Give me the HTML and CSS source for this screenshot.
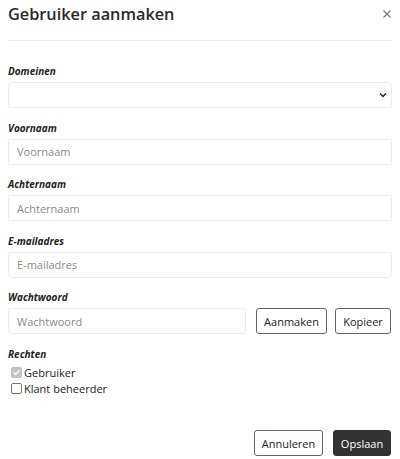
FILE: index.html
```html
<!DOCTYPE html>
<html lang="nl">
<head>
<meta charset="utf-8">
<title>Gebruiker aanmaken</title>
<link rel="stylesheet" href="styles.css">
</head>
<body>
<div class="modal">
  <div class="modal-header">
    <h1 class="modal-title">Gebruiker aanmaken</h1>
    <button class="close" type="button" aria-label="Sluiten">
      <svg width="8" height="8" viewBox="0 0 8 8"><path d="M0.5 0.5L7.5 7.5M7.5 0.5L0.5 7.5" stroke="#777" stroke-width="1.1" fill="none"/></svg>
    </button>
  </div>
  <div class="modal-body">
    <div class="group">
      <label class="label">Domeinen</label>
      <div class="select-wrap">
        <select class="control select"><option></option></select>
        <svg class="chevron" width="8" height="6" viewBox="0 0 8 6"><path d="M1 1.5L4 4.5L7 1.5" stroke="#222" stroke-width="1.4" fill="none"/></svg>
      </div>
    </div>
    <div class="group">
      <label class="label">Voornaam</label>
      <input class="control" type="text" placeholder="Voornaam">
    </div>
    <div class="group">
      <label class="label">Achternaam</label>
      <input class="control" type="text" placeholder="Achternaam">
    </div>
    <div class="group">
      <label class="label">E-mailadres</label>
      <input class="control" type="text" placeholder="E-mailadres">
    </div>
    <div class="group">
      <label class="label">Wachtwoord</label>
      <div class="pw-row">
        <input class="control pw" type="text" placeholder="Wachtwoord">
        <button class="btn btn-outline btn-aanmaken" type="button">Aanmaken</button>
        <button class="btn btn-outline btn-kopieer" type="button">Kopieer</button>
      </div>
    </div>
    <div class="group rights">
      <label class="label">Rechten</label>
      <div class="check-row"><span class="check checked"><svg width="9" height="9" viewBox="0 0 9 9"><path d="M1.8 4.6L3.7 6.5L7.3 2.4" stroke="#fff" stroke-width="1.4" fill="none"/></svg></span><span>Gebruiker</span></div>
      <div class="check-row"><span class="check"></span><span>Klant beheerder</span></div>
    </div>
  </div>
  <div class="modal-footer">
    <button class="btn btn-outline btn-cancel" type="button">Annuleren</button>
    <button class="btn btn-dark btn-save" type="button">Opslaan</button>
  </div>
</div>
</body>
</html>
```

FILE: styles.css
```css
html, body {
  margin: 0;
  padding: 0;
  background: #fff;
}
body {
  font-family: "Open Sans", "Noto Sans", sans-serif;
  color: #222;
}
.modal {
  width: 400px;
  height: 459px;
  box-sizing: border-box;
  padding: 0 8px;
  display: flex;
  flex-direction: column;
}
.modal-header {
  display: flex;
  align-items: flex-start;
  justify-content: space-between;
  padding-top: 3px;
  height: 37px;
  border-bottom: 1px solid #ececec;
}
.modal-title {
  margin: 0;
  font-size: 16.3px;
  line-height: 23px;
  font-weight: 600;
  color: #2a2a2a;
}
.close {
  border: 0;
  background: none;
  padding: 0;
  margin: 7px 1px 0 0;
  width: 8px;
  height: 8px;
  display: flex;
}
.modal-body {
  padding-top: 23px;
}
.group {
  margin-bottom: 12.5px;
}
.label {
  display: block;
  font-size: 10px;
  line-height: 15px;
  font-weight: 700;
  font-style: italic;
  color: #222;
  margin-bottom: 3px;
}
.control {
  display: block;
  box-sizing: border-box;
  width: 100%;
  height: 26px;
  border: 1px solid #ebebeb;
  border-radius: 3px;
  padding: 0 8px;
  font-family: inherit;
  font-size: 11px;
  color: #333;
  background: #fff;
  outline: none;
}
.control::placeholder {
  color: #8a8a8a;
}
.select-wrap {
  position: relative;
}
.select {
  appearance: none;
  -webkit-appearance: none;
}
.chevron {
  position: absolute;
  right: 5px;
  top: 10px;
}
.pw-row {
  display: flex;
  align-items: center;
}
.pw {
  flex: 1;
  width: auto;
  min-width: 0;
}
.btn {
  box-sizing: border-box;
  height: 26px;
  border-radius: 3px;
  font-family: inherit;
  font-size: 11px;
  padding: 0;
  cursor: pointer;
}
.btn-outline {
  background: #fff;
  border: 1px solid #666;
  color: #222;
}
.btn-dark {
  background: #333;
  border: 1px solid #333;
  color: #fff;
}
.btn-aanmaken {
  width: 71px;
  margin-left: 10px;
}
.btn-kopieer {
  width: 56px;
  margin-left: 8px;
  margin-right: 1px;
}
.check-row {
  display: flex;
  align-items: center;
  height: 16px;
  font-size: 11px;
  color: #222;
}
.check {
  box-sizing: border-box;
  width: 11px;
  height: 11px;
  margin: 0 2px 0 3px;
  border: 1px solid #777;
  border-radius: 2px;
  background: #fff;
  display: flex;
  align-items: center;
  justify-content: center;
}
.check.checked {
  background: #c4c4c4;
  border-color: #c4c4c4;
}
.modal-footer {
  margin-top: auto;
  display: flex;
  justify-content: flex-end;
  padding-bottom: 3px;
}
.btn-cancel {
  width: 69px;
}
.btn-save {
  width: 58px;
  margin-left: 10px;
  margin-right: 1px;
}
```
